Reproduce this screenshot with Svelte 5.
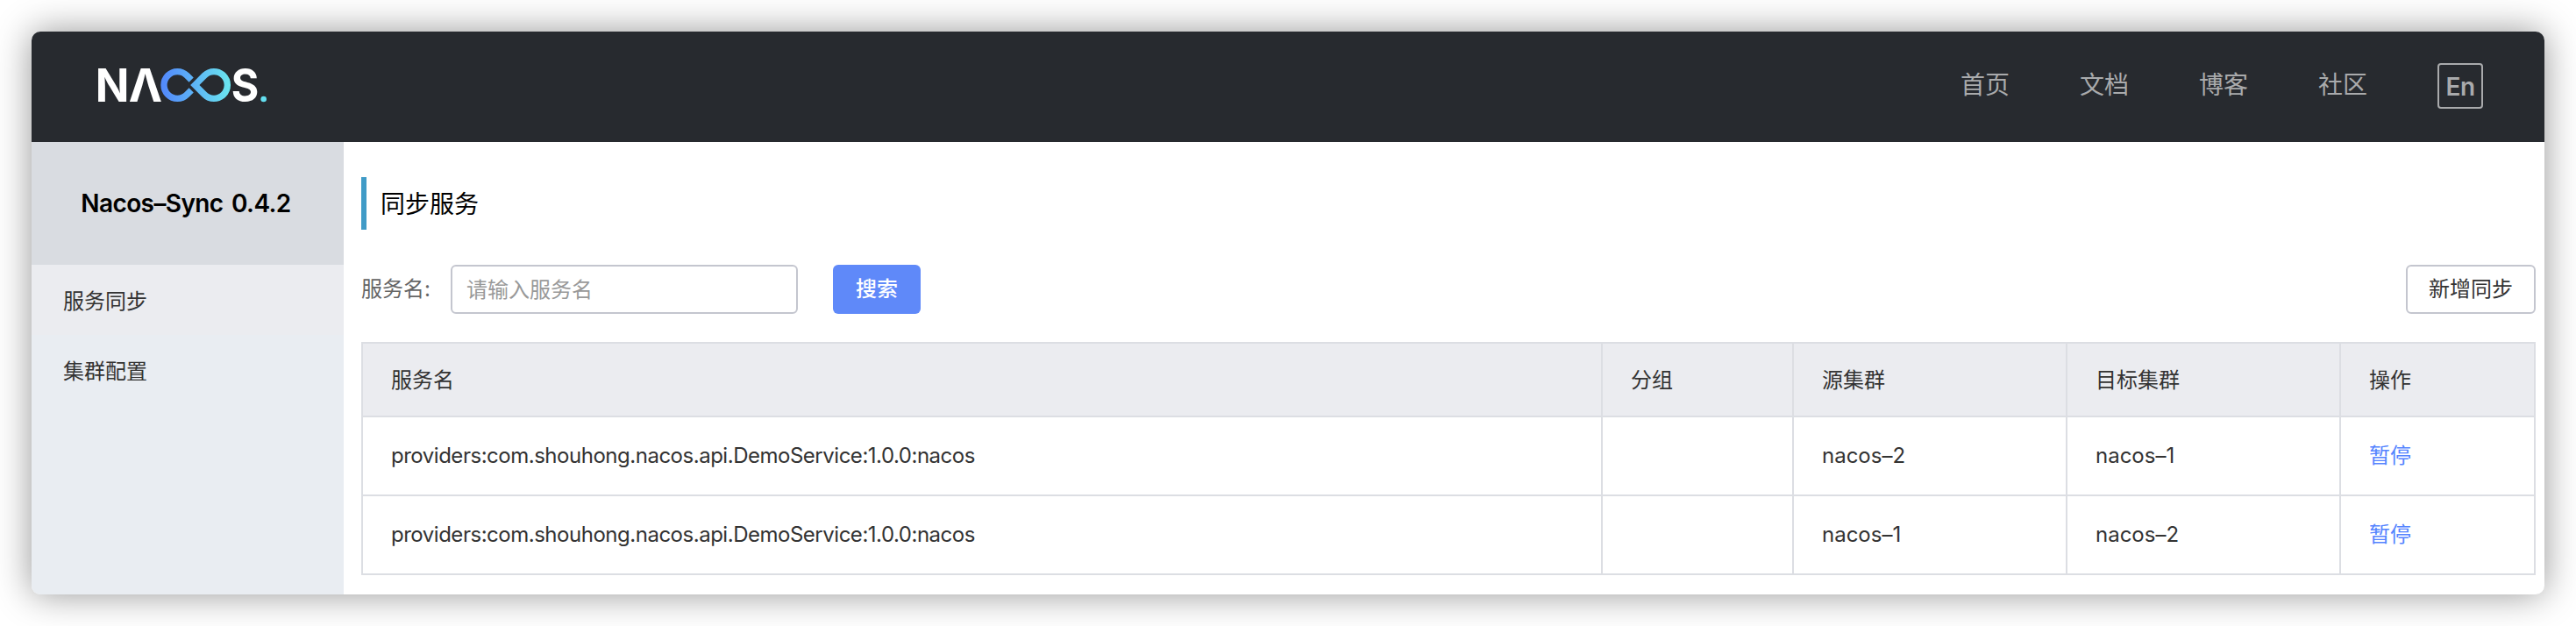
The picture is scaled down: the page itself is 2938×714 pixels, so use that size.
<script>
  const links = ['首页', '文档', '博客', '社区'];
  const menu = ['服务同步', '集群配置'];
  const columns = ['服务名', '分组', '源集群', '目标集群', '操作'];
  const service = 'providers:com.shouhong.nacos.api.DemoService:1.0.0:nacos';
  const rows = [
    { name: service, group: '', source: 'nacos–2', target: 'nacos–1' },
    { name: service, group: '', source: 'nacos–1', target: 'nacos–2' },
  ];
</script>

<div class="window">
  <header>
    <svg class="logo" viewBox="0 0 576 114" aria-label="NACOS.">
      <defs>
        <linearGradient id="loop" gradientUnits="userSpaceOnUse" x1="214" y1="0" x2="453" y2="0">
          <stop offset="0.05" stop-color="#538bfb" />
          <stop offset="1" stop-color="#6ae6ef" />
        </linearGradient>
      </defs>
      <g class="letters">
        <text transform="translate(-10 114) scale(.97 1)">N</text>
        <text transform="translate(104 114) scale(.98 1)">Λ</text>
        <text transform="translate(455 114) scale(.92 1)">S</text>
      </g>
      <g fill="none" stroke="url(#loop)" stroke-width="22">
        <path d="M318.500 39.500L303.500 24.500A46 46 0 1 0 303.500 89.500L318.500 74.500" />
        <path d="M331 57L363.500 24.500A46 46 0 1 1 363.500 89.500Z" />
      </g>
      <circle cx="566" cy="105" r="10" fill="#64dff0" />
    </svg>
    <nav>
      {#each links as link}<a>{link}</a>{/each}
      <span class="lang">En</span>
    </nav>
  </header>
  <div class="body">
    <aside>
      <h1>Nacos–Sync 0.4.2</h1>
      <ul>
        {#each menu as item, i}<li class:active={i === 0}>{item}</li>{/each}
      </ul>
    </aside>
    <main>
      <h2>同步服务</h2>
      <div class="toolbar">
        <span class="label">服务名:</span>
        <input placeholder="请输入服务名" />
        <button class="primary">搜索</button>
        <button class="add">新增同步</button>
      </div>
      <table>
        <colgroup>
          <col class="c-name" /><col class="c-group" /><col class="c-cluster" /><col class="c-cluster" /><col class="c-action" />
        </colgroup>
        <thead>
          <tr>{#each columns as column}<th>{column}</th>{/each}</tr>
        </thead>
        <tbody>
          {#each rows as row}
            <tr>
              <td class="name">{row.name}</td>
              <td>{row.group}</td>
              <td>{row.source}</td>
              <td>{row.target}</td>
              <td><a class="action">暂停</a></td>
            </tr>
          {/each}
        </tbody>
      </table>
    </main>
  </div>
</div>

<style>
  :global(body) { margin: 0; background: #fff; }
  :global(#app) { display: flow-root; overflow: hidden; height: 714px; }
  .window, .window :global(*) { box-sizing: border-box; }
  .window {
    width: 2866px;
    height: 642px;
    margin: 36px;
    border-radius: 10px;
    overflow: hidden;
    background: #fff;
    box-shadow: 0 0 42px rgba(0, 0, 0, .42);
    font: 24px/36px Inter, "Noto Sans CJK SC", sans-serif;
    color: #333;
    display: flex;
    flex-direction: column;
  }
  header {
    height: 126px;
    flex: none;
    background: #272a2f;
    display: flex;
    align-items: center;
    justify-content: space-between;
    padding: 0 70px 0 76px;
  }
  .logo { width: 192px; height: 38px; overflow: visible; margin-bottom: 4px; }
  .letters { font: 700 157px Inter, sans-serif; fill: #fff; }
  nav { display: flex; align-items: center; font-size: 28px; color: #a9aaac; }
  nav a { margin-right: 80px; margin-bottom: 4px; }
  .lang {
    width: 52px;
    height: 52px;
    border: 2px solid #a9aaac;
    border-radius: 4px;
    line-height: 50px;
    text-align: center;
    font-weight: 600;
    font-size: 28px;
    letter-spacing: -.5px;
    margin-bottom: 2px;
  }
  .body { flex: 1; display: flex; }
  aside { width: 356px; background: #e9edf2; }
  h1 {
    height: 140px;
    margin: 0;
    background: #d9dce1;
    color: #000;
    font-size: 28px;
    font-weight: 600;
    line-height: 140px;
    text-align: center;
    letter-spacing: -.6px;
    word-spacing: 3px;
    padding-right: 4px;
  }
  ul { list-style: none; margin: 0; padding: 0; }
  li { height: 80px; line-height: 84px; padding-left: 36px; }
  .active { background: #ebecf0; }
  main { flex: 1; padding: 40px 10px 0 20px; }
  h2 {
    height: 60px;
    margin: 0 0 40px;
    border-left: 6px solid #409bc7;
    padding-left: 16px;
    font-size: 28px;
    font-weight: 400;
    line-height: 62px;
    color: #000;
  }
  .toolbar { display: flex; align-items: center; height: 56px; margin-bottom: 32px; }
  .label { width: 102px; color: #666; }
  input {
    width: 396px;
    height: 56px;
    border: 2px solid #c4c6cf;
    border-radius: 6px;
    padding: 0 16px;
    font: inherit;
    margin: 0 40px 0 0;
    background: #fff;
  }
  input::placeholder { color: #999; opacity: 1; }
  button { height: 56px; border-radius: 6px; font: inherit; padding: 0; }
  .primary { width: 100px; border: 0; background: #5f89f9; color: #fff; font-weight: 500; }
  .add { width: 148px; margin-left: auto; border: 2px solid #c4c6cf; background: #fff; color: #333; }
  table {
    width: 2480px;
    table-layout: fixed;
    border-collapse: separate;
    border-spacing: 0;
    border: solid #dcdee3;
    border-width: 2px 0 0 2px;
  }
  .c-name { width: 1414px; }
  .c-group { width: 218px; }
  .c-cluster { width: 312px; }
  .c-action { width: 222px; }
  th, td {
    border: solid #dcdee3;
    border-width: 0 2px 2px 0;
    padding: 0 32px;
    text-align: left;
    font-weight: 400;
    white-space: nowrap;
  }
  th { height: 84px; padding-top: 2px; background: #ebecf0; }
  td { height: 90px; }
  .name { letter-spacing: -.48px; }
  .action { color: #5584ff; }
</style>
